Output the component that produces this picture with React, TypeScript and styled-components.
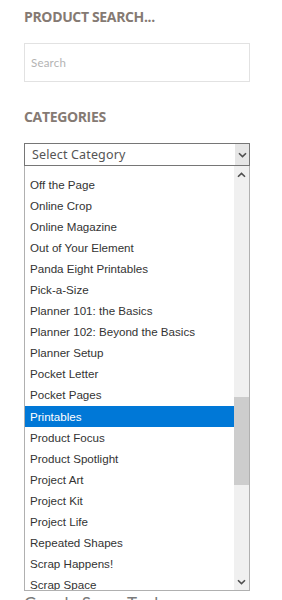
import { createGlobalStyle, styled } from "styled-components"

const categories = [
  "Off the Page",
  "Online Crop",
  "Online Magazine",
  "Out of Your Element",
  "Panda Eight Printables",
  "Pick-a-Size",
  "Planner 101: the Basics",
  "Planner 102: Beyond the Basics",
  "Planner Setup",
  "Pocket Letter",
  "Pocket Pages",
  "Printables",
  "Product Focus",
  "Product Spotlight",
  "Project Art",
  "Project Kit",
  "Project Life",
  "Repeated Shapes",
  "Scrap Happens!",
  "Scrap Space",
]

const selected = "Printables"

// scroll position of the open list, as the browser would report it
const scroll = { thumbTop: 214, thumbHeight: 88 }

const GlobalStyle = createGlobalStyle`
  html, body {
    margin: 0;
    padding: 0;
    background: #fff;
    overflow: hidden;
  }
`

const App = () => {
  return (
    <>
      <GlobalStyle />
      <Sidebar>
        <Widget>
          <WidgetTitle>Product Search...</WidgetTitle>
          <SearchInput type="text" placeholder="Search" />
        </Widget>

        <Widget>
          <WidgetTitle>Categories</WidgetTitle>
          <SelectWrap>
            <SelectBox>
              <span>Select Category</span>
              <ArrowBox>
                <Chevron dir="down" />
              </ArrowBox>
            </SelectBox>

            <Dropdown>
              <Options>
                {categories.map((c) => (
                  <Option key={c} $active={c === selected}>
                    {c}
                  </Option>
                ))}
              </Options>
              <Scrollbar>
                <ScrollButton>
                  <Chevron dir="up" />
                </ScrollButton>
                <Track>
                  <Thumb style={{ top: scroll.thumbTop, height: scroll.thumbHeight }} />
                </Track>
                <ScrollButton>
                  <Chevron dir="down" />
                </ScrollButton>
              </Scrollbar>
            </Dropdown>
          </SelectWrap>
        </Widget>

        <NextWidget>Google Scrap Tools</NextWidget>
      </Sidebar>
    </>
  )
}

const Chevron = ({ dir }: { dir: "up" | "down" }) => (
  <svg width="9" height="6" viewBox="0 0 9 6">
    <path
      d={dir === "down" ? "M1 1.2 L4.5 4.6 L8 1.2" : "M1 4.8 L4.5 1.4 L8 4.8"}
      fill="none"
      stroke="#505050"
      strokeWidth="1.6"
    />
  </svg>
)

const Sidebar = styled.div`
  width: 226px;
  padding: 8px 0 0 24px;
  display: flex;
  flex-direction: column;
`

const Widget = styled.div`
  display: flex;
  flex-direction: column;
  margin-bottom: 26px;
`

const WidgetTitle = styled.h3`
  margin: 0 0 17px;
  font-family: "Open Sans", "Liberation Sans", sans-serif;
  font-size: 14px;
  font-weight: 700;
  line-height: 18px;
  letter-spacing: -0.35px;
  text-transform: uppercase;
  color: #857a73;
`

const SearchInput = styled.input`
  box-sizing: border-box;
  width: 226px;
  height: 39px;
  margin: 0;
  padding: 0 0 0 6px;
  border: 1px solid #e2e2e2;
  outline: none;
  font-family: Lato, "Noto Sans", sans-serif;
  font-size: 11.5px;
  letter-spacing: 0.2px;
  color: #555;

  &::placeholder {
    color: #b3b3b3;
  }
`

const SelectWrap = styled.div`
  position: relative;
  width: 226px;
`

const SelectBox = styled.div`
  box-sizing: border-box;
  height: 23px;
  display: flex;
  align-items: center;
  justify-content: space-between;
  border: 1px solid #767676;
  padding-left: 7px;
  font-family: "Noto Sans", Lato, sans-serif;
  font-size: 12.5px;
  letter-spacing: 0.15px;
  color: #555;
  background: #fff;
`

const ArrowBox = styled.div`
  width: 14px;
  align-self: stretch;
  display: flex;
  align-items: center;
  justify-content: center;
  background: #e6e6e6;
`

const Dropdown = styled.div`
  position: absolute;
  top: 100%;
  left: 0;
  z-index: 10;
  box-sizing: border-box;
  width: 226px;
  height: 425px;
  display: flex;
  border: 1px solid #b0b0b0;
  border-top: none;
  background: #fff;
  overflow: hidden;
`

const Options = styled.ul`
  flex: 1;
  margin: 0;
  padding: 7.5px 0 0;
  list-style: none;
  overflow: hidden;
`

const Option = styled.li<{ $active: boolean }>`
  height: 21.1px;
  line-height: 21.1px;
  padding-left: 5px;
  font-family: "Liberation Sans", Arial, sans-serif;
  font-size: 11.6px;
  white-space: nowrap;
  color: ${(p) => (p.$active ? "#fff" : "#333")};
  background: ${(p) => (p.$active ? "#0078d7" : "transparent")};
`

const Scrollbar = styled.div`
  width: 15px;
  display: flex;
  flex-direction: column;
  background: #f0f0f0;
`

const ScrollButton = styled.div`
  height: 17px;
  display: flex;
  align-items: center;
  justify-content: center;
`

const Track = styled.div`
  flex: 1;
  position: relative;
`

const Thumb = styled.div`
  position: absolute;
  left: 0;
  right: 0;
  background: #cdcdcd;
`

const NextWidget = styled.h3`
  margin: 401px 0 0;
  font-family: Lato, "Noto Sans", sans-serif;
  font-size: 17px;
  font-weight: 400;
  color: #7a7a7a;
`

export default App
